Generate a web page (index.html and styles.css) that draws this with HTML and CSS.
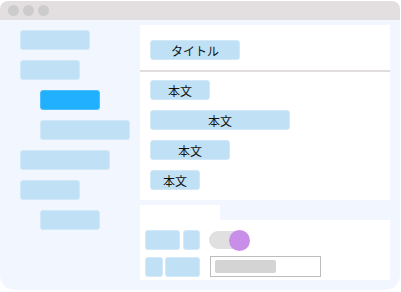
FILE: index.html
```html
<!DOCTYPE html>
<html lang="ja">
<head>
  <meta charset="UTF-8" />
  <meta name="viewport" content="width=device-width, initial-scale=1.0"/>
  <title>レイアウト</title>
  <link rel="stylesheet" href="styles.css">
</head>
<body>

  <div class="ventana">
    <!-- Barra de título -->
    <div class="barra">
      <span class="punto"></span>
      <span class="punto"></span>
      <span class="punto"></span>
    </div>

    <div class="marco">
      <!-- Menú lateral -->
      <nav class="lateral">
        <div class="item w70"></div>
        <div class="item w60"></div>
        <div class="item activo w60 sangria"></div>
        <div class="item w90 sangria"></div>
        <div class="item w90"></div>
        <div class="item w60"></div>
        <div class="item w60 sangria"></div>
      </nav>

      <!-- Contenido -->
      <main class="principal">
        <section class="panel">
          <div class="cabecera">
            <div class="chip w90">タイトル</div>
          </div>
          <div class="cuerpo">
            <div class="chip w60">本文</div>
            <div class="chip w140">本文</div>
            <div class="chip w80">本文</div>
            <div class="chip w50">本文</div>
          </div>
        </section>

        <div class="pestana"></div>
        <section class="controles">
          <div class="grupo">
            <div class="chip w35"></div>
            <div class="chip w17"></div>
          </div>
          <div class="interruptor">
            <span class="pista"></span>
            <span class="perilla"></span>
          </div>
          <div class="grupo g2">
            <div class="chip w18"></div>
            <div class="chip w35"></div>
          </div>
          <div class="entrada">
            <span class="marcador"></span>
          </div>
        </section>
      </main>
    </div>
  </div>

</body>
</html>
```

FILE: styles.css
```css
body {
  margin: 0;
  background: #ffffff;
  font-family: "Noto Sans CJK JP", "Noto Sans", sans-serif;
}

.ventana {
  width: 400px;
  margin-top: 1px;
}

.barra {
  height: 19px;
  background: #e3dfe0;
  border-radius: 8px 8px 0 0;
  display: flex;
  align-items: center;
  gap: 4px;
  padding-left: 8px;
}

.punto {
  width: 11px;
  height: 11px;
  border-radius: 50%;
  background: #cccccc;
}

.marco {
  height: 270px;
  background: #f2f6fe;
  border-radius: 0 0 15px 15px;
  display: grid;
  grid-template-columns: 140px 250px;
}

/* menú lateral */
.lateral {
  display: flex;
  flex-direction: column;
  align-items: flex-start;
  gap: 10px;
  padding: 10px 0 0 20px;
}

.item {
  height: 20px;
  box-sizing: border-box;
  background: #bfe0f5;
  border: 1px solid #d2e9f9;
  border-radius: 3px;
}

.item.activo {
  background: #20b0fe;
  border-color: #4cc0fe;
}

.sangria { margin-left: 20px; }

.w17 { width: 17px; }
.w18 { width: 18px; }
.w35 { width: 35px; }
.w50 { width: 50px; }
.w60 { width: 60px; }
.w70 { width: 70px; }
.w80 { width: 80px; }
.w90 { width: 90px; }
.w140 { width: 140px; }

/* contenido */
.principal {
  padding-top: 5px;
  display: flex;
  flex-direction: column;
}

.panel {
  background: #ffffff;
  height: 175px;
}

.cabecera {
  height: 47px;
  box-sizing: border-box;
  padding: 15px 0 0 10px;
  border-bottom: 2px solid #e1dcdd;
}

.cuerpo {
  display: flex;
  flex-direction: column;
  align-items: flex-start;
  gap: 10px;
  padding: 8px 0 0 10px;
}

.chip {
  height: 20px;
  box-sizing: border-box;
  background: #bfe0f5;
  border: 1px solid #d2e9f9;
  border-radius: 3px;
  display: flex;
  align-items: center;
  justify-content: center;
  font-size: 12px;
  color: #111;
}

.pestana {
  width: 80px;
  height: 15px;
  margin-top: 5px;
  background: #ffffff;
}

.controles {
  height: 60px;
  box-sizing: border-box;
  background: #ffffff;
  padding: 10px 5px;
  display: grid;
  grid-template-columns: 55px auto;
  column-gap: 10px;
  row-gap: 6px;
  align-items: center;
}

.grupo {
  display: flex;
  gap: 3px;
}

.grupo.g2 { gap: 2px; }

.interruptor {
  position: relative;
  height: 20px;
}

.pista {
  position: absolute;
  left: -1px;
  top: 1px;
  width: 36px;
  height: 18px;
  border-radius: 9px;
  background: #e0e0e0;
}

.perilla {
  position: absolute;
  left: 19px;
  top: 0;
  width: 21px;
  height: 21px;
  border-radius: 50%;
  background: #c88ee9;
}

.entrada {
  width: 111px;
  height: 21px;
  box-sizing: border-box;
  border: 1px solid #bdbdbd;
  padding: 3px 4px;
}

.marcador {
  display: block;
  width: 61px;
  height: 13px;
  border-radius: 2px;
  background: #d4d4d4;
}
```
